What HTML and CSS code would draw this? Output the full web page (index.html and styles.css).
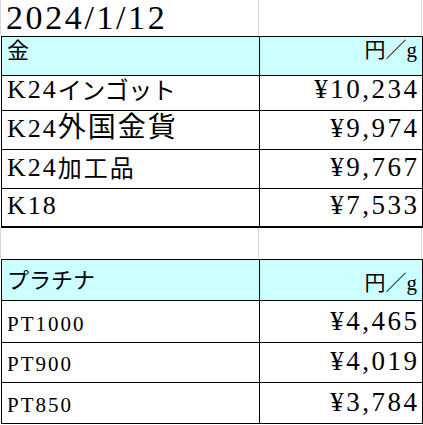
FILE: index.html
```html
<!DOCTYPE html>
<html lang="ja">
<head>
<meta charset="utf-8">
<link rel="stylesheet" href="styles.css">
</head>
<body>
<div class="sheet">
  <div class="row date-row">
    <div class="cell grid-a date">2024/1/12</div>
    <div class="cell grid-b"></div>
  </div>
  <div class="table gold">
    <div class="row head h35">
      <div class="cell a"><span class="hd-gold">金</span></div>
      <div class="cell b"><span class="unit">円／g</span></div>
    </div>
    <div class="row h39">
      <div class="cell a"><span class="lat">K24</span><span class="jp kata">インゴット</span></div>
      <div class="cell b"><span class="val">¥10,234</span></div>
    </div>
    <div class="row h39">
      <div class="cell a"><span class="lat">K24</span><span class="jp kanji-lg">外国金貨</span></div>
      <div class="cell b"><span class="val">¥9,974</span></div>
    </div>
    <div class="row h39">
      <div class="cell a"><span class="lat">K24</span><span class="jp kanji">加工品</span></div>
      <div class="cell b"><span class="val">¥9,767</span></div>
    </div>
    <div class="row h39 last">
      <div class="cell a"><span class="lat">K18</span></div>
      <div class="cell b"><span class="val">¥7,533</span></div>
    </div>
  </div>
  <div class="row blank-row">
    <div class="cell grid-a"></div>
    <div class="cell grid-b"></div>
  </div>
  <div class="table plat">
    <div class="row head h41">
      <div class="cell a"><span class="hd-plat">プラチナ</span></div>
      <div class="cell b"><span class="unit">円／g</span></div>
    </div>
    <div class="row h42">
      <div class="cell a"><span class="pt">PT1000</span></div>
      <div class="cell b"><span class="val">¥4,465</span></div>
    </div>
    <div class="row h40">
      <div class="cell a"><span class="pt">PT900</span></div>
      <div class="cell b"><span class="val">¥4,019</span></div>
    </div>
    <div class="row h41">
      <div class="cell a"><span class="pt">PT850</span></div>
      <div class="cell b"><span class="val">¥3,784</span></div>
    </div>
  </div>
</div>
</body>
</html>
```

FILE: styles.css
```css
html, body {
  margin: 0;
  padding: 0;
  background: #ffffff;
}
body {
  font-family: "Liberation Serif", "Noto Sans CJK JP", serif;
  color: #000;
}
.sheet {
  width: 423px;
  height: 425px;
  overflow: hidden;
  display: flex;
  flex-direction: column;
}
.row {
  display: grid;
  grid-template-columns: 258px 163px;
  margin-left: 1px;
}
.cell {
  box-sizing: border-box;
  display: flex;
  align-items: flex-end;
  white-space: nowrap;
}
.date-row { height: 36px; }
.blank-row { height: 31px; }
.grid-a { border-right: 1px solid #d9d9d9; }
.grid-b { border-right: 1px solid #d9d9d9; }
.date-row .grid-a,
.blank-row .grid-a { border-left: 1px solid #d9d9d9; margin-left: -1px; width: 259px; }

.date {
  font-size: 34px;
  letter-spacing: 2.6px;
  padding-left: 5px;
  padding-bottom: 1px;
  line-height: 1;
}

.table {
  border-top: 1px solid #000;
  border-left: 1px solid #000;
  margin-left: 1px;
  width: 422px;
  box-sizing: border-box;
}
.table .row { margin-left: 0; }
.table .cell {
  border-right: 1px solid #000;
  border-bottom: 1px solid #000;
}
.table .cell.a { padding-left: 5px; }
.table .cell.b { justify-content: flex-end; padding-right: 5px; }
.head .cell { background: #ccffff; }
.last .cell { border-bottom-width: 2px; }

.h35 { height: 35px; }
.h39 { height: 39px; }
.h40 { height: 40px; }
.h41 { height: 41px; }
.h42 { height: 42px; }

.hd-gold { font-size: 22px; line-height: 1.3; padding-bottom: 2px; }
.hd-plat { font-size: 22px; line-height: 1.3; padding-bottom: 4px; }
.unit { font-size: 21px; line-height: 1.3; padding-bottom: 3px; }

.lat { font-size: 26px; letter-spacing: 2px; line-height: 1; }
.jp { line-height: 1; }
.gold .cell { padding-bottom: 7px; }
.kata { font-size: 24px; letter-spacing: -0.5px; }
.kanji-lg { font-size: 28px; letter-spacing: 2px; }
.kanji { font-size: 24px; letter-spacing: 2px; }

.val { font-size: 27px; letter-spacing: 2.5px; margin-right: -2.5px; line-height: 1; }

.plat .row:not(.head) .cell { padding-bottom: 7px; }
.pt { font-size: 21px; letter-spacing: 2px; line-height: 1; }
```
